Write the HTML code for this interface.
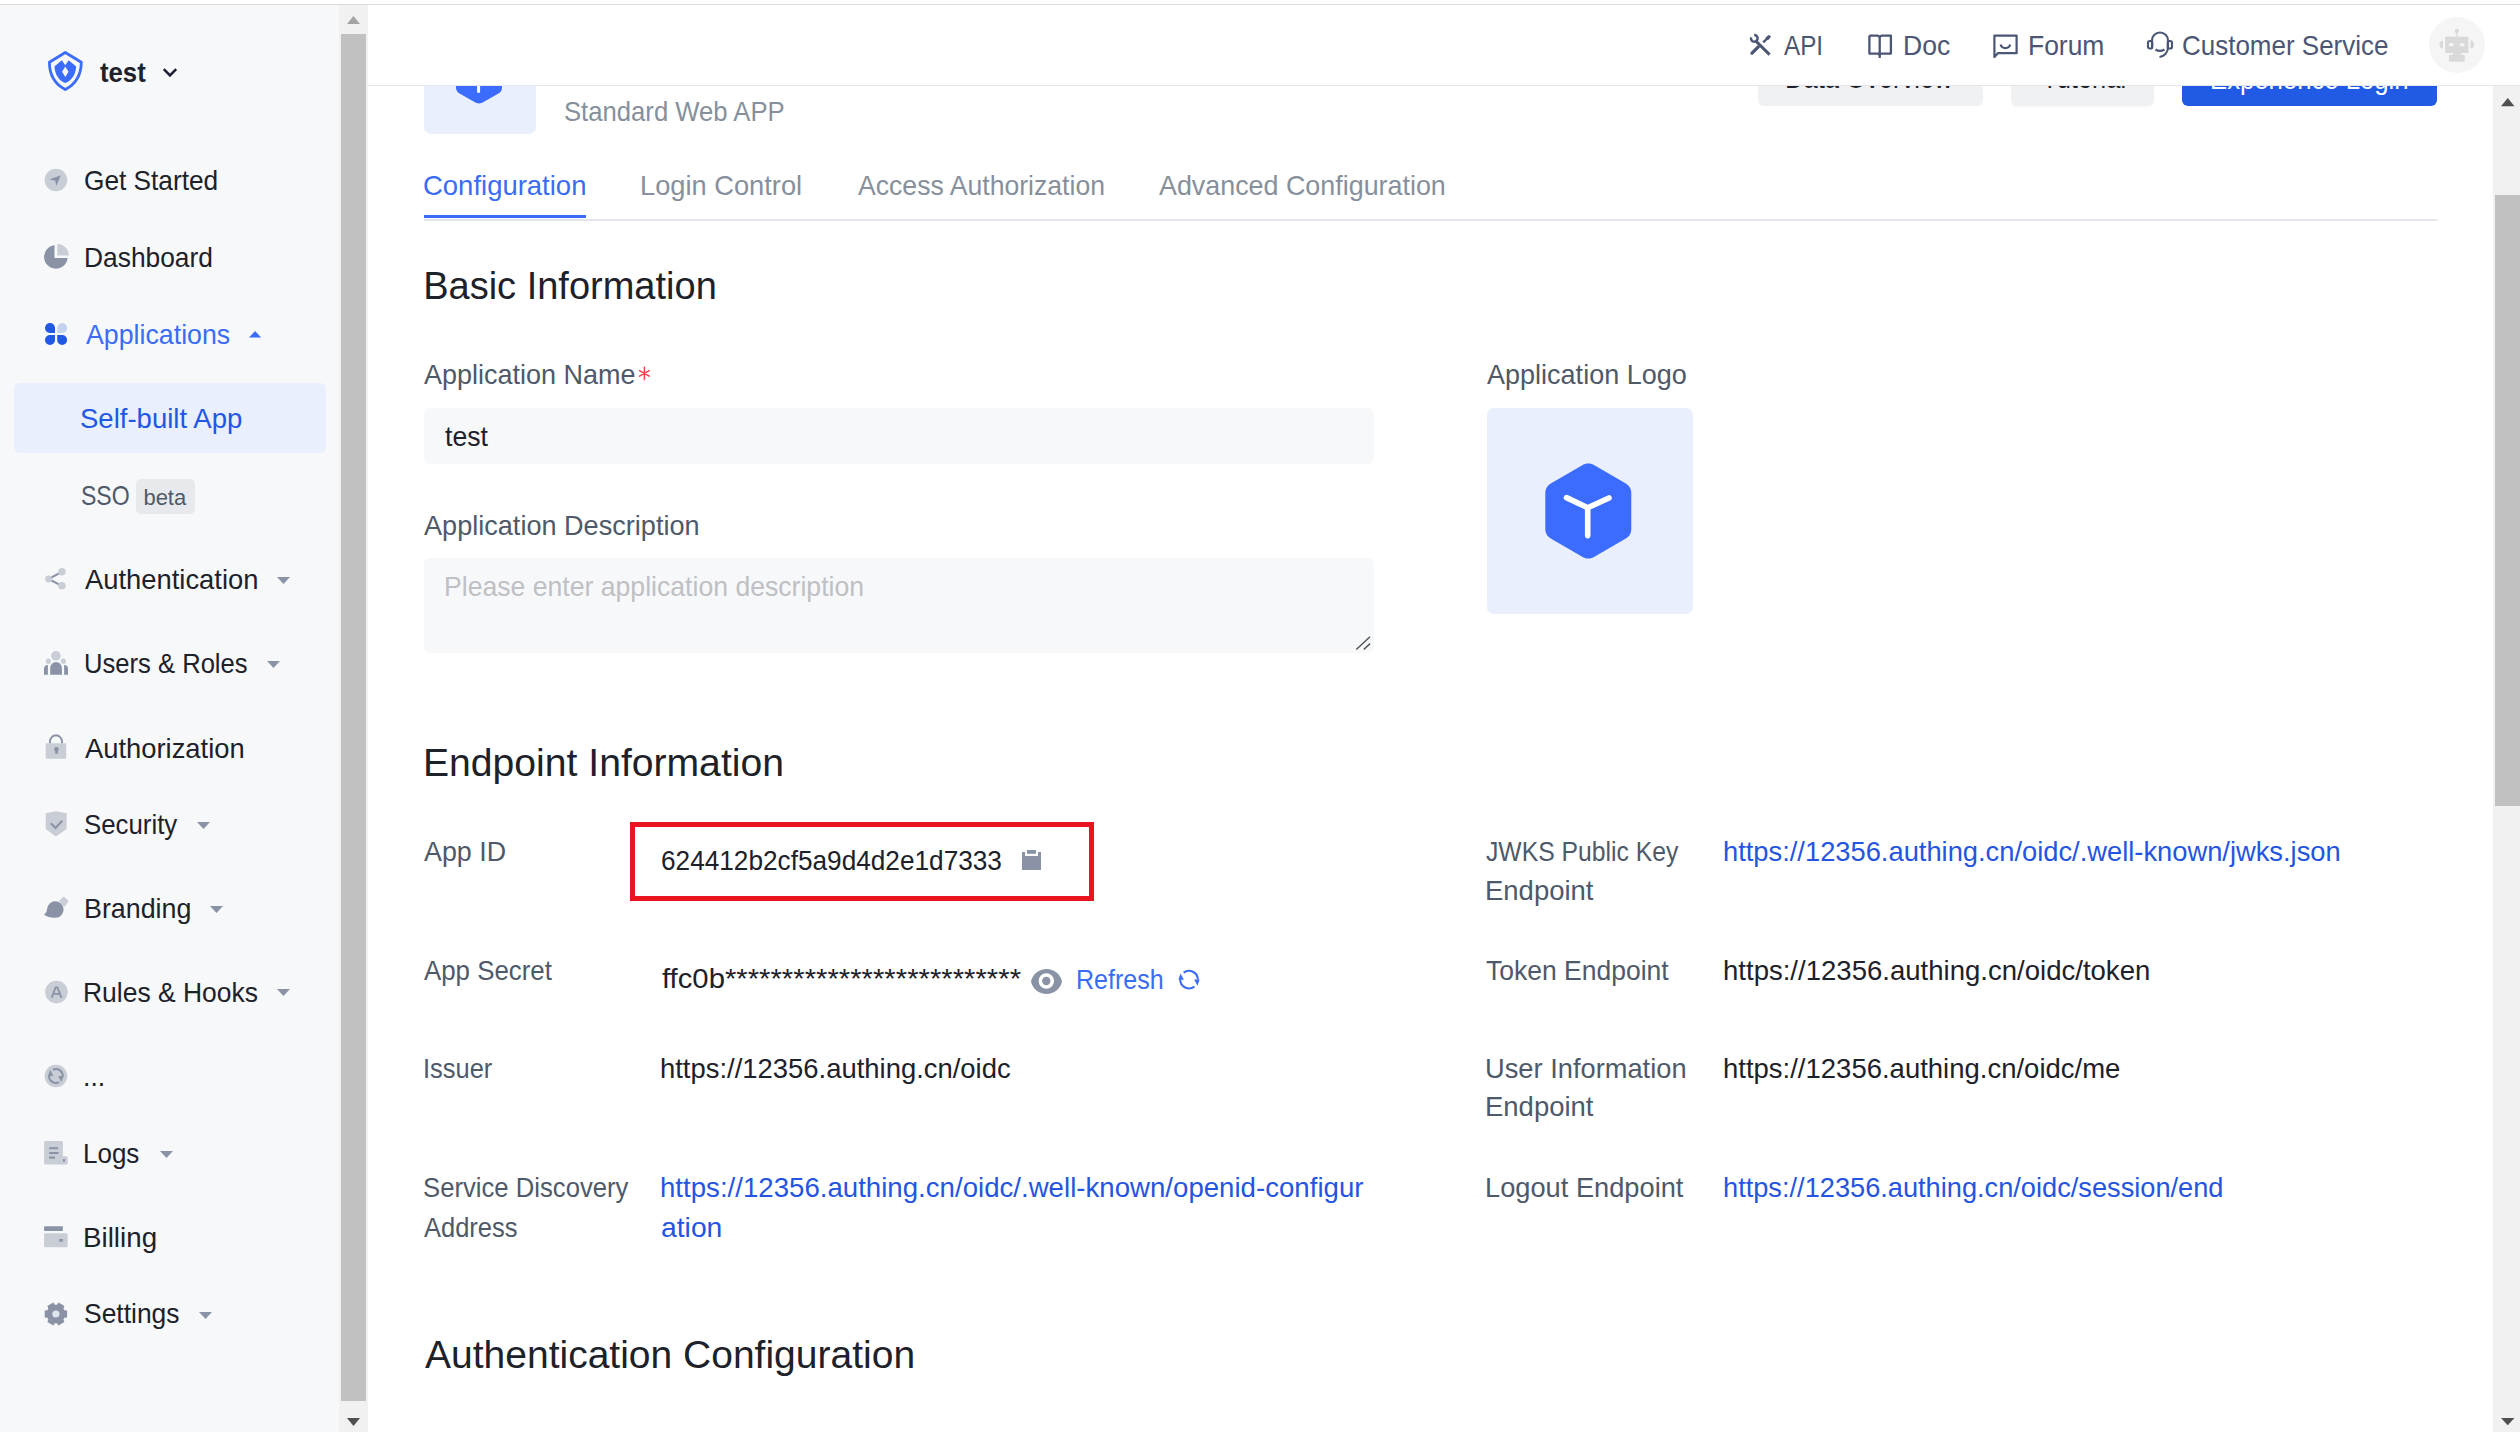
<!DOCTYPE html>
<html><head><meta charset="utf-8"><style>
html,body{margin:0;padding:0;width:2520px;height:1432px;overflow:hidden;background:#fff;font-family:"Liberation Sans",sans-serif}
.t{position:absolute;white-space:pre;transform-origin:0 0;font-family:"Liberation Sans",sans-serif}
.box{position:absolute}
.ic{position:absolute;overflow:visible}
#main{position:absolute;left:0;top:0;width:2520px;height:1432px;overflow:hidden}
#hdr{position:absolute;left:0;top:0;width:2520px;height:90px;z-index:5}
</style></head><body>
<div id="main">
<div class="box" style="left:0;top:5px;width:339px;height:1427px;background:#f7f8fa"></div>
<svg class="ic" style="left:47.7px;top:51px" width="35" height="40" viewBox="0 0 35 40">
<path d="M17.3 1.5 L33.3 11.3 C33.2 24 27 33.5 17.3 38.6 C7.6 33.5 1.4 24 1.4 11.3 Z" fill="none" stroke="#3c6cfe" stroke-width="2.8" stroke-linejoin="round"/>
<path d="M6.4 15.4 L13.8 9.2 L17.3 14.2 L20.6 9.2 L28.2 15.4 C27.6 24 23.5 29.5 17.3 32.1 C11.1 29.5 7 24 6.4 15.4 Z" fill="#3c6cfe"/>
<path d="M17.3 15.4 L20.5 20.8 L17.3 26.1 L14 20.8 Z" fill="#f7f8fa"/>
</svg>
<span class="t" style="left:100.10px;top:52.90px;font-size:28px;color:#1d2129;line-height:40px;transform:scaleX(0.9180);font-weight:700;">test</span>
<svg class="ic" style="left:162px;top:67px" width="16" height="12" viewBox="0 0 16 12"><path d="M1.8 2.2 L8 8.4 L14.2 2.2" fill="none" stroke="#1d1d35" stroke-width="2.5"/></svg>
<svg class="ic" style="left:38px;top:160px" width="40" height="40" viewBox="0 0 40 40"><circle cx="17.9" cy="20" r="11.3" fill="#c9cdd6"/><path d="M22.8 15.2 L11.3 19.4 L17.3 20.7 L18.3 26.1 Z" fill="#8a93a6"/></svg>
<span class="t" style="left:84.06px;top:161.30px;font-size:28px;color:#1d2129;line-height:40px;transform:scaleX(0.9371);">Get Started</span>
<svg class="ic" style="left:38px;top:237px" width="40" height="40" viewBox="0 0 40 40"><path d="M16.5 21 H29.65 A11.8 11.8 0 1 1 16.5 8.18 Z" fill="#8a93a6"/><path d="M19.3 18.6 V7.0 A11.6 11.6 0 0 1 30.9 18.6 Z" fill="#c9cdd6"/></svg>
<span class="t" style="left:83.62px;top:238.00px;font-size:28px;color:#1d2129;line-height:40px;transform:scaleX(0.9414);">Dashboard</span>
<svg class="ic" style="left:38px;top:314px" width="40" height="40" viewBox="0 0 40 40"><path d="M7 14 a4.9 4.9 0 0 1 4.9-4.9 h0.2 a4.9 4.9 0 0 1 4.9 4.9 V19 H11.9 A4.9 4.9 0 0 1 7 14 Z" fill="#2159e6"/><path d="M19.3 19 V14 a4.9 4.9 0 0 1 4.9-4.9 a4.9 4.9 0 0 1 4.9 4.9 a4.9 4.9 0 0 1 -4.9 5 Z" fill="#c5d3ee"/><path d="M7 26 a4.9 4.9 0 0 1 4.9-4.9 H17 V26 a4.9 4.9 0 0 1 -4.9 4.9 h-0.2 A4.9 4.9 0 0 1 7 26 Z" fill="#2159e6"/><path d="M19.2 21.1 H24.2 a4.9 4.9 0 0 1 4.9 4.9 a4.9 4.9 0 0 1 -4.9 4.9 a4.9 4.9 0 0 1 -5 -4.9 Z" fill="#2159e6"/></svg>
<span class="t" style="left:85.50px;top:314.60px;font-size:28px;color:#3a6cf6;line-height:40px;transform:scaleX(0.9553);">Applications</span>
<svg class="ic" style="left:248.8px;top:330.7px" width="12.2" height="6.4" viewBox="0 0 12.2 6.4"><path d="M0 6.4 L6.1 0 L12.2 6.4 Z" fill="#3a6cf6"/></svg>
<svg class="ic" style="left:38px;top:559px" width="40" height="40" viewBox="0 0 40 40"><path d="M10.6 20 L23.9 12.8 M10.6 20 L23.9 26.8" stroke="#8a93a6" stroke-width="2"/><circle cx="10.6" cy="20" r="3.5" fill="#c9cdd6"/><circle cx="23.9" cy="12.8" r="3.8" fill="#c9cdd6"/><circle cx="23.9" cy="26.8" r="3.8" fill="#c9cdd6"/></svg>
<span class="t" style="left:85.00px;top:560.30px;font-size:28px;color:#1d2129;line-height:40px;transform:scaleX(0.9773);">Authentication</span>
<svg class="ic" style="left:276.5px;top:576.6999999999999px" width="13" height="7" viewBox="0 0 13 7"><path d="M0 0 L13 0 L6.5 7 Z" fill="#8a93a6"/></svg>
<svg class="ic" style="left:38px;top:643px" width="40" height="40" viewBox="0 0 40 40"><circle cx="17.9" cy="12.8" r="4.8" fill="#c9cdd6"/><circle cx="10.3" cy="18.2" r="2.6" fill="#c9cdd6"/><circle cx="25.4" cy="18.2" r="2.6" fill="#c9cdd6"/><path d="M12.2 31.8 V24.9 a5.85 5.9 0 0 1 11.7 0 V31.8 Z" fill="#8a93a6"/><path d="M6 31.8 V26 a4 4 0 0 1 3.9-4 V31.8 Z" fill="#8a93a6"/><path d="M26.1 31.8 V22 a4 4 0 0 1 3.9 4 V31.8 Z" fill="#8a93a6"/></svg>
<span class="t" style="left:83.67px;top:644.20px;font-size:28px;color:#1d2129;line-height:40px;transform:scaleX(0.9142);">Users &amp; Roles</span>
<svg class="ic" style="left:266.5px;top:661px" width="13" height="7" viewBox="0 0 13 7"><path d="M0 0 L13 0 L6.5 7 Z" fill="#8a93a6"/></svg>
<svg class="ic" style="left:38px;top:727px" width="40" height="40" viewBox="0 0 40 40"><path d="M12 16.5 V14.5 a6 6.2 0 0 1 12 0 V16.5" fill="none" stroke="#8a93a6" stroke-width="1.9"/><rect x="7.7" y="16.2" width="20.5" height="15.6" rx="1" fill="#c9cdd6"/><circle cx="18.4" cy="22.2" r="2.3" fill="#8a93a6"/><rect x="17.2" y="22" width="2.6" height="4.8" fill="#8a93a6"/></svg>
<span class="t" style="left:85.00px;top:728.70px;font-size:28px;color:#1d2129;line-height:40px;transform:scaleX(0.9772);">Authorization</span>
<svg class="ic" style="left:38px;top:804px" width="40" height="40" viewBox="0 0 40 40"><path d="M7.7 9.2 L17.9 7.3 L28.6 9.2 V25 L17.9 32.5 L7.7 25 Z" fill="#c9cdd6"/><path d="M12.8 19.3 L17.5 24 L24.3 16.7" fill="none" stroke="#8a93a6" stroke-width="2.1"/></svg>
<span class="t" style="left:84.08px;top:805.40px;font-size:28px;color:#1d2129;line-height:40px;transform:scaleX(0.9220);">Security</span>
<svg class="ic" style="left:197.3px;top:821.8px" width="13" height="7" viewBox="0 0 13 7"><path d="M0 0 L13 0 L6.5 7 Z" fill="#8a93a6"/></svg>
<svg class="ic" style="left:38px;top:888px" width="40" height="40" viewBox="0 0 40 40"><path d="M20.9 12.6 L25.8 8.4 L30.7 13.1 L26.3 19 Z" fill="#c9cdd6"/><path d="M17 13.2 a8.3 8.3 0 1 1 0.6 16.6 C13 30 9 29 6 26.6 C8 25 9 23 9.2 20.5 A8.2 8.2 0 0 1 17 13.2 Z" fill="#8a93a6"/></svg>
<span class="t" style="left:83.58px;top:889.00px;font-size:28px;color:#1d2129;line-height:40px;transform:scaleX(0.9583);">Branding</span>
<svg class="ic" style="left:210px;top:906px" width="13" height="7" viewBox="0 0 13 7"><path d="M0 0 L13 0 L6.5 7 Z" fill="#8a93a6"/></svg>
<svg class="ic" style="left:38px;top:972px" width="40" height="40" viewBox="0 0 40 40"><circle cx="18.4" cy="20.1" r="11.3" fill="#c9cdd6"/><path d="M13.6 25.8 L17.6 15.4 H19.4 L23.5 25.8 M15.2 21.9 H21.9" fill="none" stroke="#8a93a6" stroke-width="1.8"/></svg>
<span class="t" style="left:83.11px;top:973.00px;font-size:28px;color:#1d2129;line-height:40px;transform:scaleX(0.9451);">Rules &amp; Hooks</span>
<svg class="ic" style="left:276.5px;top:989.4px" width="13" height="7" viewBox="0 0 13 7"><path d="M0 0 L13 0 L6.5 7 Z" fill="#8a93a6"/></svg>
<svg class="ic" style="left:38px;top:1056px" width="40" height="40" viewBox="0 0 40 40"><circle cx="17.9" cy="20" r="11.3" fill="#c9cdd6"/><path d="M11.00 20.00 A6.9 6.9 0 0 0 20.92 26.20 M24.80 20.00 A6.9 6.9 0 0 0 14.88 13.80" fill="none" stroke="#8a93a6" stroke-width="2"/><path d="M12.3 13.8 L9.8 20.1 L15.4 20.1 Z M23.3 26 L20.1 19.9 L25.9 19.9 Z" fill="#8a93a6"/></svg>
<span class="t" style="left:82.65px;top:1056.80px;font-size:28px;color:#1d2129;line-height:40px;transform:scaleX(0.9500);">...</span>
<svg class="ic" style="left:38px;top:1133px" width="40" height="40" viewBox="0 0 40 40"><rect x="6.1" y="8.1" width="18.8" height="23.5" rx="1.5" fill="#c9cdd6"/><path d="M24 23.2 H28.2 a1.5 1.5 0 0 1 1.5 1.5 V30.1 a1.5 1.5 0 0 1 -1.5 1.5 H24 Z" fill="#c9cdd6"/><rect x="11.2" y="14.2" width="8.8" height="2" fill="#8a93a6"/><rect x="11.2" y="19" width="9.4" height="2" fill="#8a93a6"/><rect x="11.2" y="23.5" width="5.8" height="2.2" fill="#8a93a6"/><rect x="25" y="26" width="2" height="2.8" fill="#8a93a6"/></svg>
<span class="t" style="left:83.14px;top:1133.50px;font-size:28px;color:#1d2129;line-height:40px;transform:scaleX(0.9276);">Logs</span>
<svg class="ic" style="left:159.6px;top:1151.2px" width="13" height="7" viewBox="0 0 13 7"><path d="M0 0 L13 0 L6.5 7 Z" fill="#8a93a6"/></svg>
<svg class="ic" style="left:38px;top:1217px" width="40" height="40" viewBox="0 0 40 40"><rect x="6.1" y="9.2" width="18.8" height="4.8" rx="0.6" fill="#8a93a6"/><rect x="6.1" y="16.2" width="23.5" height="14" rx="1.2" fill="#c9cdd6"/><rect x="21.2" y="22" width="3.7" height="2.7" fill="#8a93a6"/></svg>
<span class="t" style="left:83.02px;top:1217.70px;font-size:28px;color:#1d2129;line-height:40px;transform:scaleX(0.9915);">Billing</span>
<svg class="ic" style="left:38px;top:1294px" width="40" height="40" viewBox="0 0 40 40"><polygon points="26.40,16.24 29.09,16.58 29.09,23.42 26.40,23.76 25.41,25.48 26.46,27.98 20.53,31.40 18.89,29.25 16.91,29.25 15.27,31.40 9.34,27.98 10.39,25.48 9.40,23.76 6.71,23.42 6.71,16.58 9.40,16.24 10.39,14.52 9.34,12.02 15.27,8.60 16.91,10.75 18.89,10.75 20.53,8.60 26.46,12.02 25.41,14.52" fill="#8a93a6"/><circle cx="17.9" cy="20.0" r="3.6" fill="#dfe5ee"/></svg>
<span class="t" style="left:84.06px;top:1294.40px;font-size:28px;color:#1d2129;line-height:40px;transform:scaleX(0.9444);">Settings</span>
<svg class="ic" style="left:198.6px;top:1311.8px" width="13" height="7" viewBox="0 0 13 7"><path d="M0 0 L13 0 L6.5 7 Z" fill="#8a93a6"/></svg>
<div class="box" style="left:14px;top:383px;width:312px;height:70px;background:#e9effc;border-radius:6px"></div>
<span class="t" style="left:80.02px;top:399.40px;font-size:28px;color:#2257e5;line-height:40px;transform:scaleX(0.9834);">Self-built App</span>
<span class="t" style="left:80.58px;top:476.00px;font-size:28px;color:#4e5969;line-height:40px;transform:scaleX(0.8228);">SSO</span>
<div class="box" style="left:136px;top:479px;width:59px;height:35px;background:#e8e9ed;border-radius:5px"></div>
<span class="t" style="left:143.40px;top:478.00px;font-size:22px;color:#4e5969;line-height:40px;">beta</span>
<div class="box" style="left:339px;top:5px;width:29px;height:1427px;background:#f1f1f1"></div>
<div class="box" style="left:341px;top:34px;width:25px;height:1367px;background:#c1c1c1"></div>
<svg class="ic" style="left:347px;top:16px" width="13" height="8" viewBox="0 0 13 8"><path d="M0 8 L6.5 0 L13 8 Z" fill="#a3a3a3"/></svg>
<svg class="ic" style="left:347px;top:1417.5px" width="13" height="8" viewBox="0 0 13 8"><path d="M0 0 L13 0 L6.5 8 Z" fill="#505050"/></svg>
<div class="box" style="left:424px;top:22px;width:112px;height:112px;background:#e9effd;border-radius:7px"></div>
<svg class="ic" style="left:455px;top:47px" width="48" height="64" viewBox="0 0 48 64"><path d="M24 8 C26 8 27 8.5 29 9.6 L43 17.6 C46 19.4 47 21 47 24.5 V40 C47 43.5 46 45 43 46.8 L29 54.8 C27 55.9 26 56.4 24 56.4 C22 56.4 21 55.9 19 54.8 L5 46.8 C2 45 1 43.5 1 40 V24.5 C1 21 2 19.4 5 17.6 L19 9.6 C21 8.5 22 8 24 8 Z" fill="#3c6cfe"/><path d="M23.6 25 V44.6" stroke="#fff" stroke-width="3" stroke-linecap="round"/></svg>
<span class="t" style="left:563.88px;top:92.30px;font-size:28px;color:#86909c;line-height:40px;transform:scaleX(0.9168);">Standard Web APP</span>
<div class="box" style="left:1758px;top:42px;width:225px;height:64px;background:#f0f1f3;border-radius:6px"></div>
<span class="t" style="left:1784.87px;top:59.10px;font-size:28px;color:#1d2129;line-height:40px;transform:scaleX(0.9132);">Data Overview</span>
<div class="box" style="left:2011px;top:42px;width:143px;height:64px;background:#f0f1f3;border-radius:6px;box-shadow:0 2px 2px rgba(0,0,0,0.025)"></div>
<span class="t" style="left:2041.99px;top:59.10px;font-size:28px;color:#1d2129;line-height:40px;transform:scaleX(0.9112);">Tutorial</span>
<div class="box" style="left:2182px;top:42px;width:255px;height:64px;background:#215ae5;border-radius:6px"></div>
<span class="t" style="left:2210.16px;top:59.60px;font-size:28px;color:#fff;line-height:40px;transform:scaleX(0.9178);">Experience Login</span>
<div class="box" style="left:424px;top:219px;width:2013px;height:1.5px;background:#e5e6eb"></div>
<div class="box" style="left:424px;top:214.5px;width:162px;height:3.5px;background:#3a6cf6"></div>
<span class="t" style="left:423.32px;top:165.60px;font-size:28px;color:#3a6cf6;line-height:40px;transform:scaleX(0.9811);">Configuration</span>
<span class="t" style="left:640.35px;top:165.60px;font-size:28px;color:#86909c;line-height:40px;transform:scaleX(0.9736);">Login Control</span>
<span class="t" style="left:857.60px;top:165.60px;font-size:28px;color:#86909c;line-height:40px;transform:scaleX(0.9504);">Access Authorization</span>
<span class="t" style="left:1159.00px;top:165.60px;font-size:28px;color:#86909c;line-height:40px;transform:scaleX(0.9596);">Advanced Configuration</span>
<span class="t" style="left:423.20px;top:266.20px;font-size:38px;color:#1d2129;line-height:40px;">Basic Information</span>
<span class="t" style="left:424.20px;top:355.20px;font-size:28px;color:#4e5969;line-height:40px;transform:scaleX(0.9638);">Application Name</span>
<svg class="ic" style="left:634px;top:360px" width="22" height="24" viewBox="0 0 22 24"><path d="M10.4 7.3 V19.5 M5.5 10.7 L15.3 16.1 M5.5 16.1 L15.3 10.7" stroke="#f5414d" stroke-width="1.5" stroke-linecap="round"/></svg>
<div class="box" style="left:424px;top:408px;width:950px;height:56px;background:#f7f8fa;border-radius:6px"></div>
<span class="t" style="left:445.00px;top:417.00px;font-size:28px;color:#1d2129;line-height:40px;transform:scaleX(0.9489);">test</span>
<span class="t" style="left:424.20px;top:505.70px;font-size:28px;color:#4e5969;line-height:40px;transform:scaleX(0.9675);">Application Description</span>
<div class="box" style="left:424px;top:558px;width:950px;height:95px;background:#f7f8fa;border-radius:6px"></div>
<span class="t" style="left:443.70px;top:567.00px;font-size:28px;color:#bfc0c4;line-height:40px;transform:scaleX(0.9502);">Please enter application description</span>
<svg class="ic" style="left:1354px;top:634px" width="18" height="18" viewBox="0 0 18 18"><path d="M2.3 15.5 L16 2.8 M9.8 15.5 L16 9.6" stroke="#555" stroke-width="1.5"/></svg>
<span class="t" style="left:1487.20px;top:354.80px;font-size:28px;color:#4e5969;line-height:40px;transform:scaleX(0.9650);">Application Logo</span>
<div class="box" style="left:1487px;top:408px;width:206px;height:206px;background:#e9effd;border-radius:7px"></div>
<svg class="ic" style="left:1544px;top:462px" width="90" height="98" viewBox="0 0 90 98"><path d="M44.3 1.5 C46.8 1.5 48.3 2.1 50.8 3.5 L81 21 C85.4 23.6 87.3 26.6 87.3 31.6 V66.4 C87.3 71.4 85.4 74.4 81 77 L50.8 94.5 C48.3 95.9 46.8 96.5 44.3 96.5 C41.8 96.5 40.3 95.9 37.8 94.5 L7.6 77 C3.2 74.4 1.3 71.4 1.3 66.4 V31.6 C1.3 26.6 3.2 23.6 7.6 21 L37.8 3.5 C40.3 2.1 41.8 1.5 44.3 1.5 Z" fill="#3c6cfe"/><path d="M22.5 35.6 L43.7 45.7 L65 36 M43.7 45.7 V73.6" fill="none" stroke="#fff" stroke-width="5.6" stroke-linecap="round" stroke-linejoin="round"/></svg>
<span class="t" style="left:423.11px;top:742.80px;font-size:38px;color:#1d2129;line-height:40px;transform:scaleX(1.0293);">Endpoint Information</span>
<span class="t" style="left:423.90px;top:832.30px;font-size:28px;color:#4e5969;line-height:40px;transform:scaleX(0.9583);">App ID</span>
<div class="box" style="left:630px;top:822px;width:464px;height:79px;border:5px solid #e8141f;box-sizing:border-box"></div>
<span class="t" style="left:661.06px;top:841.00px;font-size:28px;color:#1d2129;line-height:40px;transform:scaleX(0.9356);">624412b2cf5a9d4d2e1d7333</span>
<svg class="ic" style="left:1022px;top:850px" width="19" height="20" viewBox="0 0 19 20"><path d="M0 2 H3 V6.1 H16 V2 H19 V20 H0 Z" fill="#8a93a6"/><rect x="5" y="0" width="9" height="3.8" fill="#8a93a6"/></svg>
<span class="t" style="left:423.90px;top:951.30px;font-size:28px;color:#4e5969;line-height:40px;transform:scaleX(0.9232);">App Secret</span>
<span class="t" style="left:662.00px;top:958.70px;font-size:28px;color:#1d2129;line-height:40px;transform:scaleX(1.0452);">ffc0b**************************</span>
<svg class="ic" style="left:1030px;top:968px" width="33" height="27" viewBox="0 0 33 27"><path d="M1 13.5 C2.5 6 9 1 16.5 1 C24 1 30.5 6 32 13.5 C30.5 21 24 26 16.5 26 C9 26 2.5 21 1 13.5 Z" fill="#8a93a6"/><circle cx="16.3" cy="13" r="7.7" fill="#fff"/><circle cx="16.3" cy="13" r="4.2" fill="#8a93a6"/></svg>
<span class="t" style="left:1076.01px;top:959.50px;font-size:28px;color:#3a6cf6;line-height:40px;transform:scaleX(0.8936);">Refresh</span>
<svg class="ic" style="left:1174px;top:965px" width="30" height="30" viewBox="0 0 30 30"><path d="M6.20 14.60 A8.8 8.8 0 0 0 20.48 21.49 M23.80 14.60 A8.8 8.8 0 0 0 9.63 7.63" fill="none" stroke="#3a6cf6" stroke-width="2.1"/><path d="M6.5 8.4 L4.4 14.8 L9.9 14.8 Z M23.5 20.7 L20.1 14.4 L25.6 14.4 Z" fill="#3a6cf6"/></svg>
<span class="t" style="left:422.87px;top:1049.00px;font-size:28px;color:#4e5969;line-height:40px;transform:scaleX(0.9096);">Issuer</span>
<span class="t" style="left:660.34px;top:1049.30px;font-size:28px;color:#1d2129;line-height:40px;transform:scaleX(0.9794);">https://12356.authing.cn/oidc</span>
<span class="t" style="left:423.28px;top:1168.20px;font-size:28px;color:#4e5969;line-height:40px;transform:scaleX(0.9170);">Service Discovery</span>
<span class="t" style="left:424.30px;top:1207.50px;font-size:28px;color:#4e5969;line-height:40px;transform:scaleX(0.9098);">Address</span>
<span class="t" style="left:660.03px;top:1168.20px;font-size:28px;color:#2555e0;line-height:40px;transform:scaleX(0.9868);">https://12356.authing.cn/oidc/.well-known/openid-configur</span>
<span class="t" style="left:660.99px;top:1207.50px;font-size:28px;color:#2555e0;line-height:40px;transform:scaleX(1.0103);">ation</span>
<span class="t" style="left:424.50px;top:1335.00px;font-size:38px;color:#1d2129;line-height:40px;transform:scaleX(1.0265);">Authentication Configuration</span>
<span class="t" style="left:1485.62px;top:832.00px;font-size:28px;color:#4e5969;line-height:40px;transform:scaleX(0.8825);">JWKS Public Key</span>
<span class="t" style="left:1484.54px;top:871.10px;font-size:28px;color:#4e5969;line-height:40px;transform:scaleX(0.9815);">Endpoint</span>
<span class="t" style="left:1723.05px;top:832.00px;font-size:28px;color:#2555e0;line-height:40px;transform:scaleX(0.9751);">https://12356.authing.cn/oidc/.well-known/jwks.json</span>
<span class="t" style="left:1485.55px;top:951.00px;font-size:28px;color:#4e5969;line-height:40px;transform:scaleX(0.9464);">Token Endpoint</span>
<span class="t" style="left:1723.03px;top:951.00px;font-size:28px;color:#1d2129;line-height:40px;transform:scaleX(0.9838);">https://12356.authing.cn/oidc/token</span>
<span class="t" style="left:1484.55px;top:1048.70px;font-size:28px;color:#4e5969;line-height:40px;transform:scaleX(0.9739);">User Information</span>
<span class="t" style="left:1484.54px;top:1087.40px;font-size:28px;color:#4e5969;line-height:40px;transform:scaleX(0.9815);">Endpoint</span>
<span class="t" style="left:1723.04px;top:1048.70px;font-size:28px;color:#1d2129;line-height:40px;transform:scaleX(0.9818);">https://12356.authing.cn/oidc/me</span>
<span class="t" style="left:1484.55px;top:1167.70px;font-size:28px;color:#4e5969;line-height:40px;transform:scaleX(0.9728);">Logout Endpoint</span>
<span class="t" style="left:1723.06px;top:1167.70px;font-size:28px;color:#2555e0;line-height:40px;transform:scaleX(0.9713);">https://12356.authing.cn/oidc/session/end</span>
<div class="box" style="left:2493px;top:86px;width:27px;height:1346px;background:#f1f1f1"></div>
<div class="box" style="left:2495px;top:194.5px;width:25px;height:611px;background:#c1c1c1"></div>
<svg class="ic" style="left:2500.5px;top:97.6px" width="13.5" height="8.2" viewBox="0 0 13.5 8.2"><path d="M0 8.2 L6.75 0 L13.5 8.2 Z" fill="#505050"/></svg>
<svg class="ic" style="left:2500.7px;top:1418px" width="13.5" height="7.3" viewBox="0 0 13.5 7.3"><path d="M0 0 L13.5 0 L6.75 7.3 Z" fill="#505050"/></svg>
</div>
<div id="hdr">
<div class="box" style="left:368px;top:5px;width:2152px;height:80px;background:#fff;border-bottom:1.5px solid #e5e6eb;box-sizing:content-box"></div>
<svg class="ic" style="left:1745px;top:30px" width="32" height="30" viewBox="0 0 32 30"><path d="M11.4 11.6 L24.6 24.6" stroke="#4b5675" stroke-width="2.9"/><path d="M9.18 5.10 A3.3 3.3 0 1 1 6.16 7.38" fill="none" stroke="#4b5675" stroke-width="2.5"/><path d="M7 23.2 L13.3 16.9" stroke="#4b5675" stroke-width="3.3" stroke-linecap="round"/><path d="M17.3 11.6 L20.3 8.7 L20.9 7.2 L23.6 4.9 L26 6.3 L24 9.4 L22.3 10 L19 13.2 Z" fill="#4b5675"/></svg>
<span class="t" style="left:1784.40px;top:25.70px;font-size:28px;color:#4b5675;line-height:40px;transform:scaleX(0.8651);">API</span>
<svg class="ic" style="left:1867px;top:33px" width="26" height="26" viewBox="0 0 26 26"><path d="M2.4 2.6 H10 C11.5 2.6 12.7 3.5 12.7 5 V23 M2.4 2.6 V20.6 H23.9 V2.6 H15.3 C13.8 2.6 12.7 3.5 12.7 5" fill="none" stroke="#4b5675" stroke-width="2.3" stroke-linejoin="round"/><path d="M12.7 20 V25" stroke="#4b5675" stroke-width="2.3"/></svg>
<span class="t" style="left:1902.50px;top:25.70px;font-size:28px;color:#4b5675;line-height:40px;transform:scaleX(0.9489);">Doc</span>
<svg class="ic" style="left:1992px;top:33px" width="27" height="26" viewBox="0 0 27 26"><path d="M2.4 24 V2.6 H24.6 V20.2 H5.8 Z" fill="none" stroke="#4b5675" stroke-width="2.2" stroke-linejoin="round"/><path d="M8.6 11.5 A5 5 0 0 0 18.2 11.5" fill="none" stroke="#4b5675" stroke-width="2.2"/></svg>
<span class="t" style="left:2027.91px;top:26.00px;font-size:28px;color:#4b5675;line-height:40px;transform:scaleX(0.9442);">Forum</span>
<svg class="ic" style="left:2146px;top:31px" width="28" height="28" viewBox="0 0 28 28"><path d="M6 16 V9.5 A8 8 0 0 1 22 9.5 V16 C22 22 18 25.5 13.5 26" fill="none" stroke="#4b5675" stroke-width="2.1"/><rect x="2" y="10" width="4.3" height="7.5" rx="1.8" fill="none" stroke="#4b5675" stroke-width="2.1"/><rect x="21.7" y="10" width="4.3" height="7.5" rx="1.8" fill="none" stroke="#4b5675" stroke-width="2.1"/><path d="M9.5 18.5 C12 20 16 20 18.5 18.5" fill="none" stroke="#4b5675" stroke-width="2.1"/></svg>
<span class="t" style="left:2182.27px;top:26.00px;font-size:28px;color:#4b5675;line-height:40px;transform:scaleX(0.9277);">Customer Service</span>
<div class="box" style="left:2429px;top:17px;width:56px;height:56px;border-radius:50%;background:#f5f5f5"></div>
<svg class="ic" style="left:2437px;top:27px" width="40" height="38" viewBox="0 0 40 38"><circle cx="19.9" cy="4" r="2.2" fill="#d9d9d9"/><rect x="19.3" y="4" width="1.2" height="6" fill="#d9d9d9"/><rect x="8.2" y="9.7" width="23.2" height="16.3" fill="#d9d9d9"/><ellipse cx="14.3" cy="17.7" rx="2.5" ry="1.8" fill="#f5f5f5"/><ellipse cx="25" cy="17.7" rx="2.5" ry="1.8" fill="#f5f5f5"/><path d="M6 13.6 A3.5 4 0 0 0 6 21.6 Z" fill="#d9d9d9"/><path d="M33.5 13.6 A3.5 4 0 0 1 33.5 21.6 Z" fill="#d9d9d9"/><rect x="16" y="26" width="8" height="2" fill="#d9d9d9"/><rect x="12" y="27.7" width="15.7" height="7.1" rx="1" fill="#d9d9d9"/></svg>
<div class="box" style="left:0;top:0;width:2520px;height:4px;background:#fff"></div>
<div class="box" style="left:0;top:4px;width:2520px;height:1px;background:#d9dadd"></div>
</div>
</body></html>
